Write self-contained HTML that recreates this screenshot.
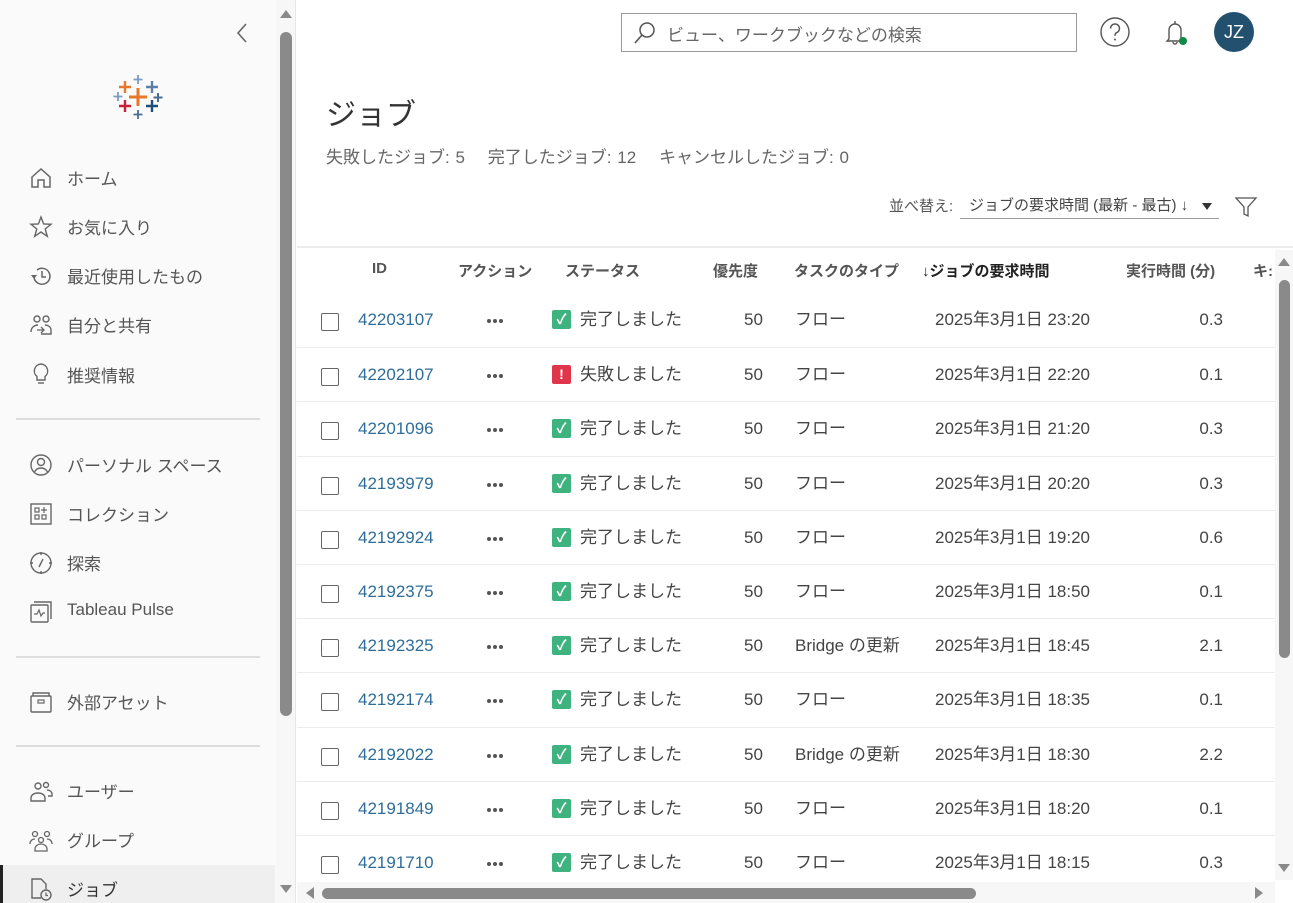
<!DOCTYPE html>
<html><head><meta charset="utf-8"><style>
*{margin:0;padding:0;box-sizing:border-box}
body{width:1293px;height:903px;overflow:hidden;background:#fff;font-family:"Liberation Sans","Noto Sans CJK JP",sans-serif;color:#333;position:relative}
.a{position:absolute;white-space:nowrap}
#side{position:absolute;left:0;top:0;width:296px;height:903px;background:#fafafa;border-right:1px solid #e6e6e6}
.nav{position:absolute;left:67px;font-size:17px;color:#555}
.ic{position:absolute;left:28px;width:26px;height:26px}
.hr{position:absolute;left:16px;width:244px;height:2px;background:#ddd}
.row{position:absolute;left:297px;width:978px;height:54px;border-top:1px solid #ececec;font-size:17px;color:#444}
.row span{position:absolute;top:0;line-height:54px}
.cb{position:absolute;left:24px;top:20px;width:18px;height:18px;border:1.5px solid #666;border-radius:2px;background:#fff}
.st{position:absolute;left:255px;top:17px;width:19px;height:19px;border-radius:2px;color:#fff;font-size:14px;text-align:center;line-height:19px;font-weight:bold}
.dots{position:absolute;left:190px;top:26px;width:18px;height:4px}
.dots i{position:absolute;top:0;width:4px;height:4px;border-radius:50%;background:#555}
.hd{position:absolute;top:260px;font-size:15px;color:#555;font-weight:bold}
</style></head><body>
<div id="side">
  <svg class="a" style="left:234px;top:22px" width="16" height="22"><path d="M12 2 L4 11 L12 20" fill="none" stroke="#666" stroke-width="1.6"/></svg>
  <svg class="a" style="left:110px;top:72px" width="56" height="52">
    <g stroke-width="2.4" fill="none">
      <path d="M28 16v18M19 25h18" stroke="#e8762b" stroke-width="3"/>
      <path d="M15 9v12M9 15h12" stroke="#e8762b"/>
      <path d="M28 3v9M23.5 7.5h9" stroke="#7a9cc0" stroke-width="1.8"/>
      <path d="M42 9v12M36 15h12" stroke="#5b7fa6"/>
      <path d="M8 20v9M3.5 24.5h9" stroke="#7a9cc0" stroke-width="1.8"/>
      <path d="M48 21v9M43.5 25.5h9" stroke="#4a6b95" stroke-width="2"/>
      <path d="M15 28v12M9 34h12" stroke="#c72037"/>
      <path d="M42 28v12M36 34h12" stroke="#1f4e79"/>
      <path d="M28 38v9M23.5 42.5h9" stroke="#4a6b95" stroke-width="1.8"/>
    </g></svg>
  <svg class="ic" style="top:165px" viewBox="0 0 26 26"><path d="M4 12 L13 4 L22 12 V22 H16 V15 H10 V22 H4 Z" fill="none" stroke="#666" stroke-width="1.5"/></svg>
  <div class="nav" style="top:165px">ホーム</div>
  <svg class="ic" style="top:214px" viewBox="0 0 26 26"><path d="M13 3 L15.6 10 L23 10.3 L17.2 15 L19.3 22.3 L13 18 L6.7 22.3 L8.8 15 L3 10.3 L10.4 10 Z" fill="none" stroke="#666" stroke-width="1.4"/></svg>
  <div class="nav" style="top:214px">お気に入り</div>
  <svg class="ic" style="top:263px" viewBox="0 0 26 26"><path d="M6 14 A8 8 0 1 0 9 7" fill="none" stroke="#666" stroke-width="1.5"/><path d="M3 12 L6 16 L9 12" fill="#666"/><path d="M14 8v6h4" fill="none" stroke="#666" stroke-width="1.5"/></svg>
  <div class="nav" style="top:263px">最近使用したもの</div>
  <svg class="ic" style="top:312px" viewBox="0 0 26 26"><circle cx="9" cy="7" r="3" fill="none" stroke="#666" stroke-width="1.4"/><circle cx="18" cy="7" r="3" fill="none" stroke="#666" stroke-width="1.4"/><path d="M3 20c0-5 4-7 7-7M13 22h10v-4c0-3-3-5-6-5" fill="none" stroke="#666" stroke-width="1.4"/><path d="M9 18h7M13 15l3 3-3 3" fill="none" stroke="#666" stroke-width="1.3"/></svg>
  <div class="nav" style="top:312px">自分と共有</div>
  <svg class="ic" style="top:361px" viewBox="0 0 26 26"><path d="M13 3a7 7 0 0 0-4 12.5V19h8v-3.5A7 7 0 0 0 13 3z" fill="none" stroke="#666" stroke-width="1.4"/><path d="M10 22h6" stroke="#666" stroke-width="1.4"/></svg>
  <div class="nav" style="top:362px">推奨情報</div>
  <div class="hr" style="top:418px"></div>
  <svg class="ic" style="top:452px" viewBox="0 0 26 26"><circle cx="13" cy="13" r="10" fill="none" stroke="#666" stroke-width="1.4"/><circle cx="13" cy="10" r="3.5" fill="none" stroke="#666" stroke-width="1.4"/><path d="M6.5 20c1.5-3 4-4 6.5-4s5 1 6.5 4" fill="none" stroke="#666" stroke-width="1.4"/></svg>
  <div class="nav" style="top:452px">パーソナル スペース</div>
  <svg class="ic" style="top:501px" viewBox="0 0 26 26"><rect x="3" y="3" width="20" height="20" fill="none" stroke="#666" stroke-width="1.4"/><rect x="7" y="7" width="4" height="4" fill="none" stroke="#666" stroke-width="1.2"/><rect x="7" y="14" width="4" height="4" fill="none" stroke="#666" stroke-width="1.2"/><rect x="14" y="14" width="4" height="4" fill="none" stroke="#666" stroke-width="1.2"/><path d="M16 6v6M13 9h6" stroke="#666" stroke-width="1.2"/></svg>
  <div class="nav" style="top:501px">コレクション</div>
  <svg class="ic" style="top:550px" viewBox="0 0 26 26"><circle cx="13" cy="13" r="10" fill="none" stroke="#666" stroke-width="1.4"/><path d="M15 9l-4 8" stroke="#666" stroke-width="1.4"/><path d="M13 2v3M13 21v3M2 13h3M21 13h3" stroke="#666" stroke-width="1.4"/></svg>
  <div class="nav" style="top:550px">探索</div>
  <svg class="ic" style="top:599px" viewBox="0 0 26 26"><rect x="3" y="6" width="17" height="17" rx="1" fill="none" stroke="#666" stroke-width="1.4"/><path d="M6 3h17v17" fill="none" stroke="#666" stroke-width="1.4"/><path d="M6 15h3l2-4 2 6 2-3h2" fill="none" stroke="#666" stroke-width="1.2"/></svg>
  <div class="nav" style="top:600px">Tableau Pulse</div>
  <div class="hr" style="top:656px"></div>
  <svg class="ic" style="top:689px" viewBox="0 0 26 26"><rect x="3" y="7" width="20" height="16" rx="1" fill="none" stroke="#666" stroke-width="1.4"/><path d="M5 7V4h16v3" fill="none" stroke="#666" stroke-width="1.4"/><rect x="10" y="11" width="6" height="3" fill="none" stroke="#666" stroke-width="1.2"/></svg>
  <div class="nav" style="top:689px">外部アセット</div>
  <div class="hr" style="top:745px"></div>
  <svg class="ic" style="top:779px" viewBox="0 0 26 26"><circle cx="10" cy="7" r="3" fill="none" stroke="#666" stroke-width="1.4"/><circle cx="18" cy="6" r="2.5" fill="none" stroke="#666" stroke-width="1.4"/><path d="M3 22v-3c0-3 3-5 7-5s7 2 7 5v3zM19 11c3 0 5 2 5 4v2h-4" fill="none" stroke="#666" stroke-width="1.4"/></svg>
  <div class="nav" style="top:778px">ユーザー</div>
  <svg class="ic" style="top:828px" viewBox="0 0 26 26"><circle cx="7" cy="6" r="2.5" fill="none" stroke="#666" stroke-width="1.3"/><circle cx="19" cy="6" r="2.5" fill="none" stroke="#666" stroke-width="1.3"/><circle cx="13" cy="12" r="2.5" fill="none" stroke="#666" stroke-width="1.3"/><path d="M7 23v-2c0-3 3-5 6-5s6 2 6 5v2zM2 16c0-3 2-5 5-5M24 16c0-3-2-5-5-5" fill="none" stroke="#666" stroke-width="1.3"/></svg>
  <div class="nav" style="top:827px">グループ</div>
  <div class="a" style="left:0;top:865px;width:275px;height:38px;background:#efefef;border-left:3px solid #222"></div>
  <svg class="ic" style="top:876px" viewBox="0 0 26 26"><path d="M13 22H4V3h9l5 5v5" fill="none" stroke="#666" stroke-width="1.4"/><circle cx="18" cy="19" r="5" fill="none" stroke="#666" stroke-width="1.4"/><path d="M18 16.5v3h2" fill="none" stroke="#666" stroke-width="1.2"/></svg>
  <div class="nav" style="top:876px;color:#333">ジョブ</div>
  <div class="a" style="left:276px;top:0;width:19px;height:903px;background:#f7f7f7"></div>
  <div class="a" style="left:280px;top:10px;width:0;height:0;border-left:6px solid transparent;border-right:6px solid transparent;border-bottom:8px solid #8a8a8a"></div>
  <div class="a" style="left:280px;top:32px;width:12px;height:684px;background:#8a8a8a;border-radius:6px"></div>
  <div class="a" style="left:280px;top:885px;width:0;height:0;border-left:6px solid transparent;border-right:6px solid transparent;border-top:8px solid #8a8a8a"></div>
</div>

<div class="a" style="left:621px;top:13px;width:456px;height:39px;border:1px solid #999;background:#fff"></div>
<svg class="a" style="left:632px;top:20px" width="26" height="26"><circle cx="15" cy="10" r="7" fill="none" stroke="#555" stroke-width="1.5"/><path d="M10 15L3 23" stroke="#555" stroke-width="1.6"/></svg>
<div class="a" style="left:667px;top:21px;font-size:17px;color:#666">ビュー、ワークブックなどの検索</div>
<svg class="a" style="left:1099px;top:16px" width="32" height="32"><circle cx="16" cy="16" r="14" fill="none" stroke="#555" stroke-width="1.4"/><path d="M11.5 12.5a4.5 4.5 0 1 1 6 4.2c-1.2.6-1.5 1.3-1.5 3" fill="none" stroke="#555" stroke-width="1.5"/><circle cx="16" cy="23.5" r="1" fill="#555"/></svg>
<svg class="a" style="left:1160px;top:16px" width="32" height="32"><path d="M9 23V14a6 6 0 0 1 12 0v9l2 2H7z" fill="none" stroke="#555" stroke-width="1.4"/><path d="M15 5v3M13 26a2 2 0 0 0 4 0" fill="none" stroke="#555" stroke-width="1.4"/><circle cx="23" cy="25" r="4" fill="#108a4a"/></svg>
<div class="a" style="left:1214px;top:12px;width:40px;height:40px;border-radius:50%;background:#23506f;color:#fff;font-size:18px;text-align:center;line-height:40px">JZ</div>

<div class="a" style="left:326px;top:90px;font-size:30px;color:#333">ジョブ</div>
<div class="a" style="left:326px;top:143px;font-size:17px;color:#666;word-spacing:1px">失敗したジョブ: 5&nbsp;&nbsp;&nbsp;&nbsp;完了したジョブ: 12&nbsp;&nbsp;&nbsp;&nbsp;キャンセルしたジョブ: 0</div>
<div class="a" style="left:889px;top:195px;font-size:15px;color:#555">並べ替え:</div>
<div class="a" style="left:960px;top:194px;width:259px;height:25px;border-bottom:1px solid #999;font-size:15px;color:#444;padding-left:9px">ジョブの要求時間 (最新 - 最古) ↓</div>
<div class="a" style="left:1202px;top:203px;border-left:5px solid transparent;border-right:5px solid transparent;border-top:7px solid #333"></div>
<svg class="a" style="left:1234px;top:195px" width="24" height="24"><path d="M2 3h20l-8 9v9l-4-2v-7z" fill="none" stroke="#555" stroke-width="1.3"/></svg>

<div class="a" style="left:297px;top:246px;width:996px;height:2px;background:#ececec"></div>
<div class="hd" style="left:372px">ID</div>
<div class="hd" style="left:458px">アクション</div>
<div class="hd" style="left:565px">ステータス</div>
<div class="hd" style="left:713px">優先度</div>
<div class="hd" style="left:794px">タスクのタイプ</div>
<div class="hd" style="left:922px;color:#222">↓ジョブの要求時間</div>
<div class="hd" style="left:1126px">実行時間 (分)</div>
<div class="hd" style="left:1253px">キ:</div>

<div id="rows"></div>
<script>
var d=[["42203107",1,"フロー","23:20","0.3"],["42202107",0,"フロー","22:20","0.1"],["42201096",1,"フロー","21:20","0.3"],["42193979",1,"フロー","20:20","0.3"],["42192924",1,"フロー","19:20","0.6"],["42192375",1,"フロー","18:50","0.1"],["42192325",1,"Bridge の更新","18:45","2.1"],["42192174",1,"フロー","18:35","0.1"],["42192022",1,"Bridge の更新","18:30","2.2"],["42191849",1,"フロー","18:20","0.1"],["42191710",1,"フロー","18:15","0.3"]];
var h="";
d.forEach(function(r,i){var t=293+i*54.2;
h+='<div class="row" style="top:'+t+'px;'+(i==0?'border-top:none':'')+'"><div class="cb"></div>'+
'<span style="left:61px;color:#2e6d99">'+r[0]+'</span>'+
'<div class="dots"><i style="left:0"></i><i style="left:6px"></i><i style="left:12px"></i></div>'+
(r[1]?'<div class="st" style="background:#3fb37f">✓</div>':'<div class="st" style="background:#e0364b">!</div>')+
'<span style="left:283px">'+(r[1]?'完了しました':'失敗しました')+'</span>'+
'<span style="left:447px">50</span><span style="left:498px">'+r[2]+'</span>'+
'<span style="left:638px">2025年3月1日 '+r[3]+'</span>'+
'<span style="left:890px;width:36px;text-align:right">'+r[4]+'</span></div>';});
document.getElementById("rows").innerHTML=h;
</script>

<div class="a" style="left:1275px;top:250px;width:18px;height:630px;background:#f7f7f7"></div>
<div class="a" style="left:1278px;top:258px;border-left:6px solid transparent;border-right:6px solid transparent;border-bottom:8px solid #8a8a8a"></div>
<div class="a" style="left:1279px;top:280px;width:11px;height:378px;background:#8a8a8a;border-radius:6px"></div>
<div class="a" style="left:1278px;top:864px;border-left:6px solid transparent;border-right:6px solid transparent;border-top:8px solid #8a8a8a"></div>
<div class="a" style="left:297px;top:882px;width:978px;height:21px;background:#f7f7f7"></div>
<div class="a" style="left:306px;top:887px;border-top:6px solid transparent;border-bottom:6px solid transparent;border-right:8px solid #8a8a8a"></div>
<div class="a" style="left:322px;top:888px;width:654px;height:11px;background:#8a8a8a;border-radius:6px"></div>
<div class="a" style="left:1255px;top:887px;border-top:6px solid transparent;border-bottom:6px solid transparent;border-left:8px solid #8a8a8a"></div>
</body></html>
